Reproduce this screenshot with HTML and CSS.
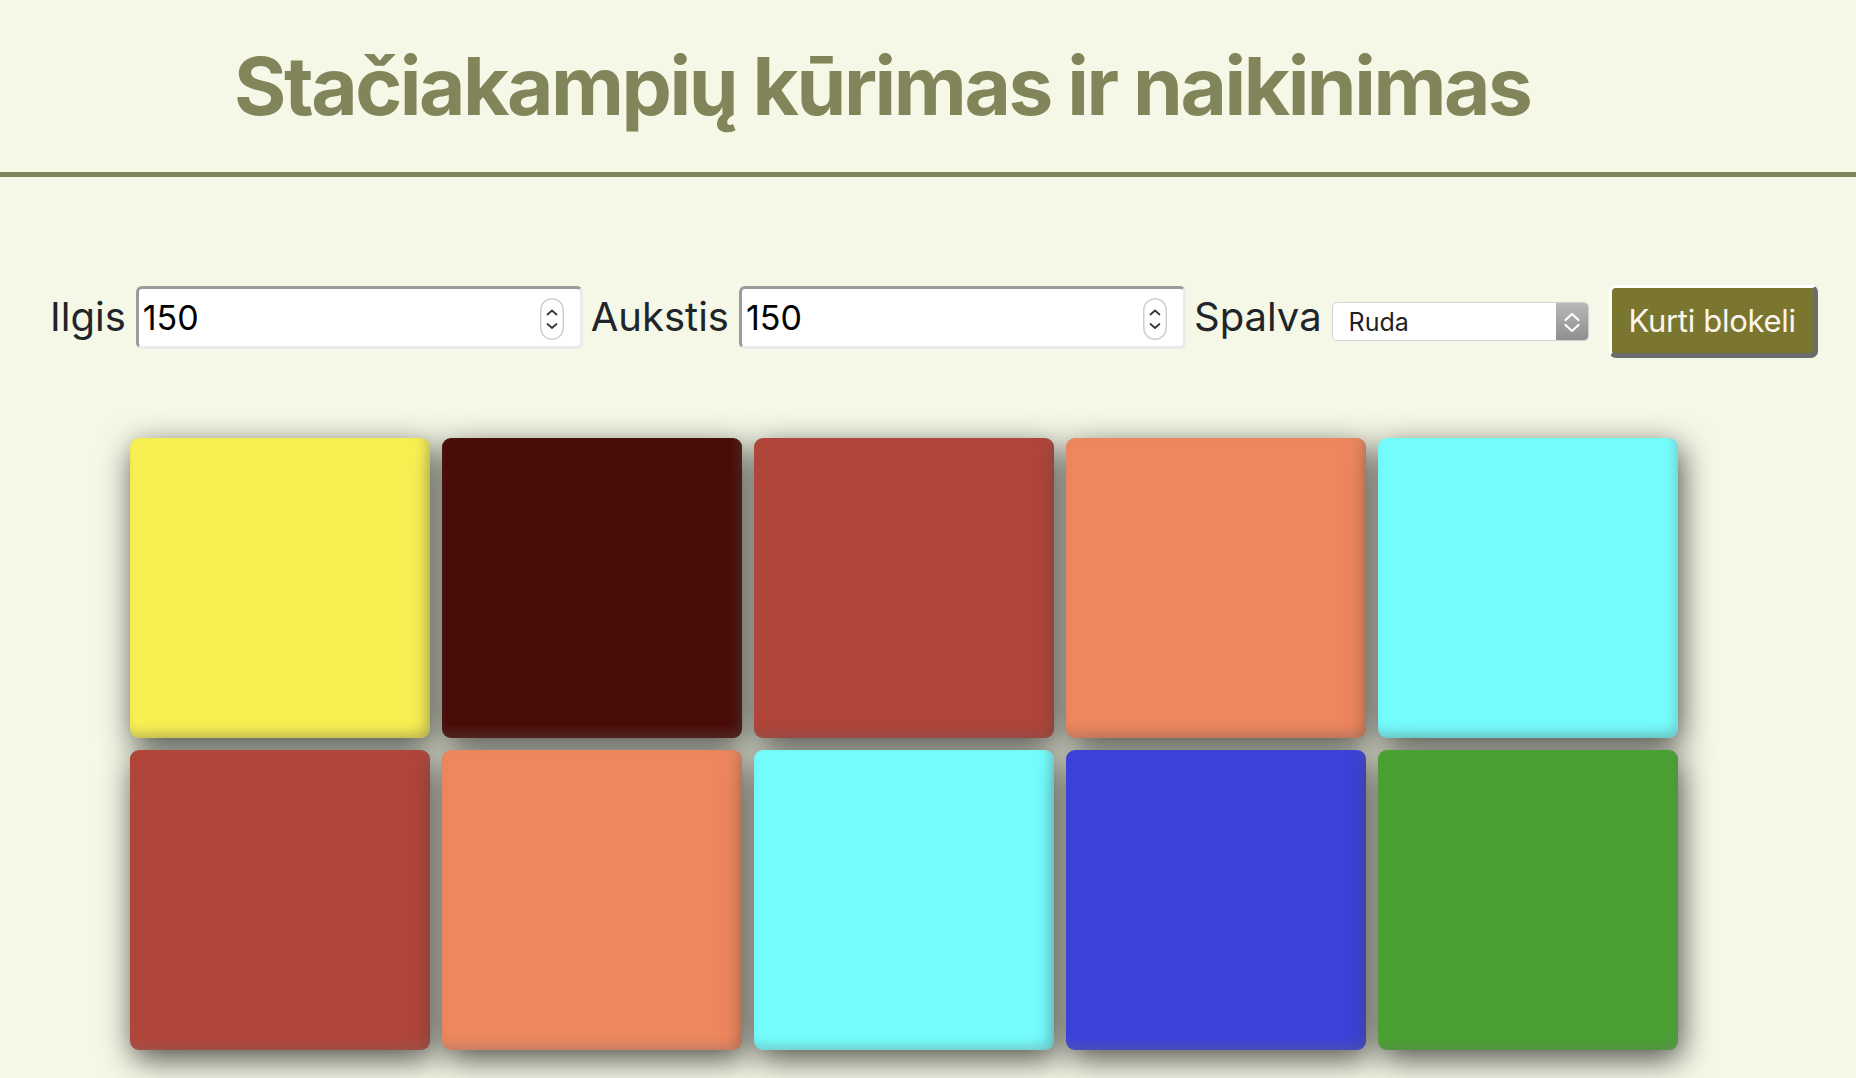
FILE: index.html
```html
<!DOCTYPE html>
<html lang="lt">
<head>
<meta charset="utf-8">
<title>Stačiakampių kūrimas ir naikinimas</title>
<link rel="stylesheet" href="styles.css">
</head>
<body>
<header class="page-header">
  <h1 class="title">Stačiakampių kūrimas ir naikinimas</h1>
</header>

<form class="controls">
  <label class="ctl-label" for="ilgis">Ilgis</label>
  <span class="num-wrap">
    <input class="num-input" id="ilgis" type="number" value="150">
    <svg class="spin" width="24" height="42" viewBox="0 0 24 42" aria-hidden="true">
      <rect x="0.75" y="0.75" width="22.5" height="40.5" rx="11.25" fill="#fff" stroke="#cfcfcf" stroke-width="1.5"/>
      <path d="M7.5 16.5 L12 12.5 L16.5 16.5" fill="none" stroke="#333" stroke-width="1.7" stroke-linecap="round" stroke-linejoin="round"/>
      <path d="M7.5 26 L12 30 L16.5 26" fill="none" stroke="#333" stroke-width="1.7" stroke-linecap="round" stroke-linejoin="round"/>
    </svg>
  </span>
  <label class="ctl-label" for="aukstis">Aukstis</label>
  <span class="num-wrap">
    <input class="num-input" id="aukstis" type="number" value="150">
    <svg class="spin" width="24" height="42" viewBox="0 0 24 42" aria-hidden="true">
      <rect x="0.75" y="0.75" width="22.5" height="40.5" rx="11.25" fill="#fff" stroke="#cfcfcf" stroke-width="1.5"/>
      <path d="M7.5 16.5 L12 12.5 L16.5 16.5" fill="none" stroke="#333" stroke-width="1.7" stroke-linecap="round" stroke-linejoin="round"/>
      <path d="M7.5 26 L12 30 L16.5 26" fill="none" stroke="#333" stroke-width="1.7" stroke-linecap="round" stroke-linejoin="round"/>
    </svg>
  </span>
  <label class="ctl-label" for="spalva">Spalva</label>
  <span class="sel-wrap">
    <select class="sel" id="spalva">
      <option>Ruda</option>
      <option>Geltona</option>
      <option>Žalia</option>
      <option>Mėlyna</option>
    </select>
    <span class="sel-arrow" aria-hidden="true">
      <svg width="32" height="37" viewBox="0 0 32 37">
        <path d="M9.5 17 L16 11 L22.5 17" fill="none" stroke="#fff" stroke-width="2.2" stroke-linecap="round" stroke-linejoin="round"/>
        <path d="M9.5 22 L16 28 L22.5 22" fill="none" stroke="#fff" stroke-width="2.2" stroke-linecap="round" stroke-linejoin="round"/>
      </svg>
    </span>
  </span>
  <button class="btn" type="button">Kurti blokeli</button>
</form>

<section class="blocks">
  <div class="block c-yellow"></div>
  <div class="block c-dark"></div>
  <div class="block c-red"></div>
  <div class="block c-orange"></div>
  <div class="block c-cyan"></div>
  <div class="block c-red"></div>
  <div class="block c-orange"></div>
  <div class="block c-cyan"></div>
  <div class="block c-blue"></div>
  <div class="block c-green"></div>
</section>
</body>
</html>
```

FILE: styles.css
```css
* { box-sizing: border-box; }

body {
  margin: 0;
  background: #f6f8e7;
  font-family: Inter, "Noto Sans", "Liberation Sans", sans-serif;
  color: #212529;
}

.page-header {
  padding: 37px 0 38px 234px;
  border-bottom: 5px solid #80825a;
}

.title {
  margin: 0;
  font-size: 80px;
  line-height: 97px;
  font-weight: 700;
  color: #82855a;
  letter-spacing: -2.45px;
}

.controls {
  display: flex;
  align-items: center;
  margin: 108px 0 0 0;
  padding-left: 50px;
  height: 73px;
}

.ctl-label {
  font-size: 40px;
  line-height: 48px;
  margin-bottom: 10px;
  color: #212529;
}

.num-wrap {
  position: relative;
  display: block;
  width: 447px;
  height: 63px;
  margin: 0 8px 8px 10px;
}

.num-input {
  width: 100%;
  height: 100%;
  margin: 0;
  padding: 0 40px 0 4px;
  font-family: Inter, "Noto Sans", sans-serif;
  font-size: 34px;
  color: #000;
  background: #fff;
  border-style: solid;
  border-width: 3px;
  border-color: #9b9b9b #ebebeb #ebebeb #9b9b9b;
  border-radius: 6px;
  outline: none;
  -moz-appearance: textfield;
}
.num-input::-webkit-inner-spin-button,
.num-input::-webkit-outer-spin-button {
  -webkit-appearance: none;
  margin: 0;
}

.spin {
  position: absolute;
  right: 19px;
  top: 12px;
}

.sel-wrap {
  position: relative;
  display: block;
  width: 257px;
  height: 39px;
  margin: 0 20px 0 10px;
}

.sel {
  -webkit-appearance: none;
  appearance: none;
  width: 100%;
  height: 100%;
  margin: 0;
  padding: 0 40px 0 16px;
  font-family: Inter, "Noto Sans", sans-serif;
  font-size: 25px;
  color: #222;
  background: #fff;
  border: 1px solid #d2d2d2;
  border-radius: 5px;
  outline: none;
}

.sel-arrow {
  position: absolute;
  top: 1px;
  right: 1px;
  width: 32px;
  height: 37px;
  background: linear-gradient(#b8b8b8, #8f8f8f);
  border-radius: 0 4px 4px 0;
  display: flex;
}

.btn {
  width: 209px;
  height: 73px;
  margin: 0;
  padding: 0;
  font-family: Inter, "Noto Sans", sans-serif;
  font-size: 31px;
  letter-spacing: -0.3px;
  color: #fbf5ee;
  background: #7a752f;
  border-style: solid;
  border-width: 3px 5px 5px 3px;
  border-color: #ffffff #6c6c6c #6c6c6c #ffffff;
  border-radius: 7px;
}

.blocks {
  display: grid;
  grid-template-columns: repeat(5, 300px);
  gap: 12px;
  padding: 0 0 30px 130px;
  margin-top: 80px;
}

.block {
  width: 300px;
  height: 300px;
  border-radius: 9px;
  box-shadow: 3px 9px 32px rgba(0, 0, 0, 0.7), inset -4px -6px 10px rgba(110, 110, 110, 0.28);
}

.c-yellow { background: #f8f053; }
.c-dark   { background: #4a0e0a; }
.c-red    { background: #b2453a; }
.c-orange { background: #ee875e; }
.c-cyan   { background: #75fcfc; }
.c-blue   { background: #3c42da; }
.c-green  { background: #4aa232; }
```
